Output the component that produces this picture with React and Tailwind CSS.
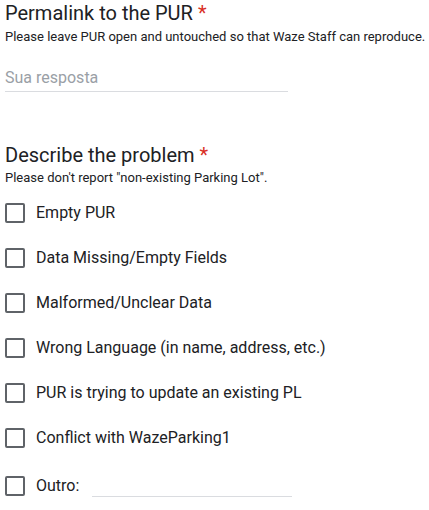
import React from 'react';

const OPTIONS = [
  'Empty PUR',
  'Data Missing/Empty Fields',
  'Malformed/Unclear Data',
  'Wrong Language (in name, address, etc.)',
  'PUR is trying to update an existing PL',
  'Conflict with WazeParking1',
];

function Box() {
  return <span className="block w-[20px] h-[20px] shrink-0 rounded-[2px] border-2 border-[#5f6368]" />;
}

export default function App() {
  return (
    <div
      className="min-h-screen bg-white pl-[5px] pt-[1px] text-[#202124]"
      style={{ fontFamily: 'Roboto, "Noto Sans", sans-serif' }}
    >
      <h2 className="text-[20px] leading-[24px]">
        Permalink to the PUR<span className="ml-[5px] text-[#d93025]">*</span>
      </h2>
      <p className="mt-[4px] text-[13px] leading-[16px]">
        Please leave PUR open and untouched so that Waze Staff can reproduce.
      </p>
      <div className="mt-[21px] w-[283px] pb-[1px] border-b border-[#dadce0] text-[16px] leading-[24px] text-[#9aa0a6]">
        Sua resposta
      </div>

      <h2 className="mt-[51px] text-[20px] leading-[24px]">
        Describe the problem<span className="ml-[5px] text-[#d93025]">*</span>
      </h2>
      <p className="mt-[3px] text-[13px] leading-[16px]">
        Please don't report "non-existing Parking Lot".
      </p>

      <div className="mt-[17px] flex flex-col gap-[25px]">
        {OPTIONS.map((o) => (
          <label key={o} className="flex items-center gap-[11px] h-[20px]">
            <Box />
            <span className="text-[16px] leading-[20px]">{o}</span>
          </label>
        ))}
      </div>

      <div className="mt-[28px] flex items-start h-[22px]">
        <label className="flex items-center gap-[11px] h-[20px]">
          <Box />
          <span className="text-[16px] leading-[20px]">Outro:</span>
        </label>
        <div className="ml-[13px] w-[200px] h-[21px] border-b border-[#dadce0]" />
      </div>
    </div>
  );
}
